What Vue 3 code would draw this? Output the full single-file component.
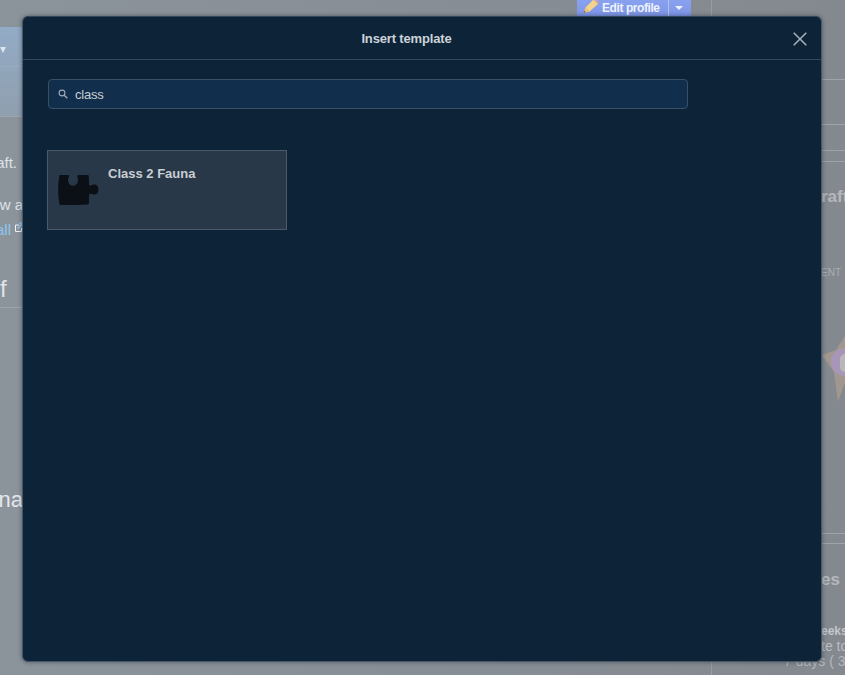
<script setup>
const title = 'Insert template'
const query = 'class'
</script>

<template>
  <div class="page">
    <div class="bg" aria-hidden="true">
      <div class="left-panel"><span class="tri"></span><span class="panel-line"></span></div>
      <div class="rule rule-l1"></div>
      <span class="t t-aft">aft.</span>
      <span class="t t-wa">w a</span>
      <span class="t t-all">all</span>
      <svg class="ext" width="8" height="10" viewBox="0 0 8 10"><path d="M.5 3 H4 M.5 3 V9.500 H6.500 V6" fill="none" stroke="#eef3f9" stroke-width="1"/><path d="M2.500 6.500 L7 2 M4.200 1 H7.500 V4.300" fill="none" stroke="#8fc8f2" stroke-width="1.500"/></svg>
      <span class="t t-f">f</span>
      <div class="rule rule-l2"></div>
      <span class="t t-na">na</span>

      <div class="edit">
        <svg width="16" height="15" viewBox="0 0 16 15" class="pencil"><path d="M.5 14 L2.500 8.500 L10.500 .5 L15 5 L6.500 12.500 Z" fill="#f3d48a"/><path d="M2.500 8.500 L6.500 12.500 L5 13 L2 10 Z" fill="#e4b870"/><path d="M10.500 .5 L11.500 -1 L16 3.500 L15 5 Z" fill="#e2a095"/><path d="M.5 14 L1.500 11.500 L3 13 Z" fill="#6b5d55"/></svg>
        <span class="edit-label">Edit profile</span>
        <span class="edit-sep"></span>
        <span class="edit-tri"></span>
      </div>
      <div class="vline"></div>
      <div class="rule rule-r1"></div>
      <div class="rule rule-r2"></div>
      <div class="rule rule-r3"></div>
      <div class="rule rule-r4"></div>
      <div class="rule rule-r6"></div>
      <div class="rule rule-r5"></div>
      <span class="t t-raft">raft</span>
      <span class="t t-ent">ENT</span>
      <svg class="badge" width="24" height="70" viewBox="0 0 24 70">
        <path d="M1 20 L15 15 L24 1 V47 L17 67 L13 37 Z" fill="#a1978f"/>
        <circle cx="24" cy="27" r="14" fill="#a896b8"/>
        <rect x="19" y="19" width="12" height="18" rx="5" fill="#b9b7bc"/>
      </svg>
      <span class="t t-es">es</span>
      <span class="t t-eeks">eeks</span>
      <span class="t t-te">te to</span>
      <span class="t t-days">7 days ( 3/</span>
    </div>

    <section class="dialog">
      <header class="head">
        <h2 class="title">{{ title }}</h2>
        <button class="close" type="button" aria-label="Close">
          <svg width="14" height="14" viewBox="0 0 14 14"><path d="M.7 .7 L13.300 13.300 M13.300 .7 L.7 13.300" stroke="#a3adb6" stroke-width="1.600" fill="none"/></svg>
        </button>
      </header>
      <div class="search-row">
        <label class="search">
          <svg class="mag" width="10" height="10" viewBox="0 0 10 10"><circle cx="4" cy="4" r="2.900" fill="none" stroke="#9fabb8" stroke-width="1.100"/><path d="M6.200 6.200 L9.300 9.300" stroke="#9fabb8" stroke-width="1.300"/></svg>
          <span class="query">{{ query }}</span>
        </label>
      </div>
      <div class="results">
        <article class="card">
          <svg class="puzzle" width="42" height="32" viewBox="0 0 42 32">
            <path d="M2 1 H10 C11 1 11.500 2 10.500 3.500 C9 7 11 11.700 15 11.700 C19 11.700 21 7 19.500 3.500 C19 2 19.500 1 20.500 1 H29.500 C30.500 1 30.800 1.500 30.800 3 L31 11 C31.500 12 33 11.500 34 11 C37 9.500 40.500 11 40.500 15.500 C40.500 20 37 21.500 34 20 C33 19.500 31.500 19.500 31 21 L31 28.500 C31 30 30.500 30.500 29 30.500 L19 31 L3 31 C2 31 1.500 30.500 1.300 29 C-.2 21 -.2 10 1.300 2 C1.400 1.300 1.500 1 2 1 Z" fill="#0a1015"/>
          </svg>
          <span class="card-name">Class 2 Fauna</span>
        </article>
      </div>
    </section>
  </div>
</template>

<style>
html, body { margin: 0; padding: 0; }
</style>

<style scoped>
.page {
  position: relative;
  width: 845px;
  height: 675px;
  overflow: hidden;
  background: linear-gradient(90deg, #8b939b 0%, #84898f 100%);
  font-family: "Liberation Sans", Arial, sans-serif;
}
.bg { position: absolute; inset: 0; }

.left-panel {
  position: absolute; left: 0; top: 27px; width: 23px; height: 89px;
  background: linear-gradient(180deg, #93abc6 0%, #8f9fae 100%);
}
.panel-line { position: absolute; left: 0; right: 0; top: 39px; height: 1px; background: #98acc2; }
.tri {
  position: absolute; left: 0; top: 20px; width: 0; height: 0;
  border-left: 3.500px solid transparent; border-right: 3.500px solid transparent;
  border-top: 6px solid #dce5ee;
}
.rule { position: absolute; height: 1px; background: #9da4ab; }
.rule-l1 { left: 0; top: 116px; width: 23px; }
.rule-l2 { left: 0; top: 307px; width: 23px; }
.t { position: absolute; white-space: nowrap; color: #dfe3e7; font-size: 15px; line-height: 16px; }
.t-aft { right: 828px; top: 155px; }
.t-wa { right: 822px; top: 197px; }
.t-all { right: 834px; top: 222px; color: #8ec6f2; }
.ext { position: absolute; left: 15px; top: 222px; }
.t-f { left: 0; top: 276px; font-size: 24px; line-height: 26px; }
.t-na { right: 822px; top: 488px; font-size: 22px; line-height: 24px; color: #e6e9ec; }

.edit {
  position: absolute; left: 577px; top: -4px; width: 114px; height: 20px;
  display: flex; align-items: center;
  background: linear-gradient(180deg, #8ca5f2, #7d95e6);
  color: #eef2fc; font-size: 12px; font-weight: 700;
}
.pencil { margin-left: 6px; flex: none; overflow: visible; }
.edit-label { margin-left: 3px; margin-top: 4px; letter-spacing: -.42px; white-space: nowrap; }
.edit-sep { position: absolute; left: 91px; top: 0; bottom: 0; width: 1px; background: #b4c2ef; }
.edit-tri {
  position: absolute; left: 98px; top: 10px; width: 0; height: 0;
  border-left: 4px solid transparent; border-right: 4px solid transparent;
  border-top: 4px solid #eef2fc;
}
.vline { position: absolute; left: 711px; top: 0; bottom: 0; width: 1px; background: #979ca3; }
.rule-r1 { left: 821px; top: 79px; width: 24px; }
.rule-r2 { left: 821px; top: 124px; width: 24px; }
.rule-r3 { left: 821px; top: 150px; width: 24px; }
.rule-r4 { left: 821px; top: 161px; width: 24px; }
.rule-r5 { left: 821px; top: 543px; width: 24px; }
.rule-r6 { left: 821px; top: 533px; width: 24px; }
.t-raft { left: 821px; top: 187px; font-size: 17px; line-height: 20px; font-weight: 700; color: #b4b8bd; }
.t-ent { left: 821px; top: 266px; font-size: 10px; line-height: 14px; color: #a9aeb3; }
.badge { position: absolute; left: 821px; top: 335px; }
.t-es { left: 821px; top: 570px; font-size: 17px; line-height: 20px; font-weight: 700; color: #b4b8bd; }
.t-eeks { left: 821px; top: 624px; font-size: 12px; line-height: 14px; font-weight: 700; color: #c2c6ca; }
.t-te { left: 821px; top: 639px; font-size: 14px; line-height: 14px; color: #b9bdc2; }
.t-days { left: 784px; top: 654px; font-size: 14px; line-height: 14px; color: #b4b8bd; }

.dialog {
  position: absolute; left: 22px; top: 16px;
  width: 800px; height: 646px;
  box-sizing: border-box;
  display: flex; flex-direction: column;
  background: #0c2338;
  border: 1px solid #46586a;
  border-top-color: #33475a;
  border-radius: 6px;
  box-shadow: 0 0 4px rgba(20, 30, 40, .5);
}
.head {
  position: relative;
  height: 43px; flex: none; box-sizing: border-box;
  padding-right: 31px;
  display: flex; align-items: center; justify-content: center;
  border-bottom: 1px solid #33485b;
}
.title { margin: 0; font-size: 13px; letter-spacing: -.15px; font-weight: 700; color: #cdd3d9; }
.close {
  position: absolute; right: 14px; top: 15px;
  width: 14px; height: 14px; padding: 0; display: block;
  background: none; border: 0;
}
.close svg { display: block; }
.search-row {
  flex: none; height: 70px; box-sizing: border-box;
  padding: 19px 25px 0;
  border-bottom: 1px solid #0e263c;
}
.search {
  display: flex; align-items: center;
  width: 640px; height: 30px; box-sizing: border-box;
  padding-left: 9px;
  background: #112e4c;
  border: 1px solid #3c4f62;
  border-radius: 4px;
}
.mag { flex: none; }
.query { margin-left: 7px; font-size: 13px; letter-spacing: -.2px; color: #c8ced4; }
.results { flex: 1; padding: 20px 24px; }
.card {
  position: relative;
  width: 240px; height: 80px; box-sizing: border-box;
  background: #283849;
  border: 1px solid #4a5a6b;
}
.puzzle { position: absolute; left: 10px; top: 23px; }
.card-name {
  position: absolute; left: 60px; top: 15px;
  font-size: 13px; line-height: 16px; font-weight: 700; color: #c9ced3;
}
</style>
